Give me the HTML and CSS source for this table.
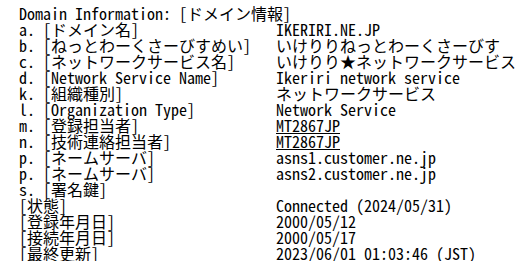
FILE: index.html
```html
<!DOCTYPE html>
<html lang="ja">
<head>
<meta charset="utf-8">
<title>Whois</title>
<link rel="stylesheet" href="styles.css">
</head>
<body>
<div class="whois">
  <div class="title">Domain Information: [ドメイン情報]</div>
  <div class="grid">
    <span class="k">a. [ドメイン名]</span><span class="v">IKERIRI.NE.JP</span>
    <span class="k">b. [ねっとわーくさーびすめい]</span><span class="v">いけりりねっとわーくさーびす</span>
    <span class="k">c. [ネットワークサービス名]</span><span class="v">いけりり★ネットワークサービス</span>
    <span class="k">d. [Network Service Name]</span><span class="v">Ikeriri network service</span>
    <span class="k">k. [組織種別]</span><span class="v">ネットワークサービス</span>
    <span class="k">l. [Organization Type]</span><span class="v">Network Service</span>
    <span class="k">m. [登録担当者]</span><span class="v"><a href="#" class="link">MT2867JP</a></span>
    <span class="k">n. [技術連絡担当者]</span><span class="v"><a href="#" class="link">MT2867JP</a></span>
    <span class="k">p. [ネームサーバ]</span><span class="v">asns1.customer.ne.jp</span>
    <span class="k">p. [ネームサーバ]</span><span class="v">asns2.customer.ne.jp</span>
    <span class="k">s. [署名鍵]</span><span class="v"></span>
    <span class="k">[状態]</span><span class="v">Connected (2024/05/31)</span>
    <span class="k">[登録年月日]</span><span class="v">2000/05/12</span>
    <span class="k">[接続年月日]</span><span class="v">2000/05/17</span>
    <span class="k">[最終更新]</span><span class="v">2023/06/01 01:03:46 (JST)</span>
  </div>
</div>
</body>
</html>
```
FILE: styles.css
```css
html, body {
  margin: 0;
  padding: 0;
  background: #fff;
}
.whois {
  padding: 5px 0 0 19px;
  font-family: "Noto Sans Mono CJK JP", "Noto Sans CJK JP", "Liberation Mono", monospace;
  font-size: 16px;
  line-height: 16px;
  color: #000;
}
.title {
  height: 16px;
  white-space: pre;
}
.grid {
  display: grid;
  grid-template-columns: 257px auto;
  grid-auto-rows: 16px;
}
.k, .v {
  white-space: pre;
}
.link {
  color: #000;
  text-decoration: underline;
}
```
